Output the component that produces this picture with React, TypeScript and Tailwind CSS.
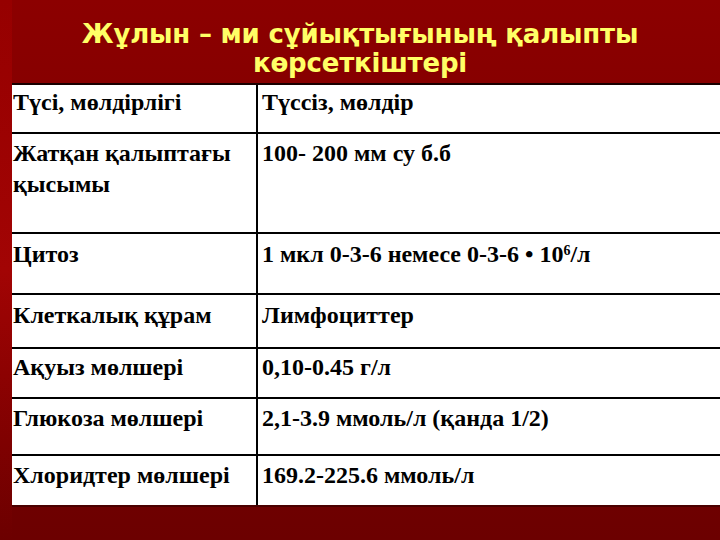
import React from "react";

type Row = { a: React.ReactNode; b: React.ReactNode; h: string; pt: string };

const rows: Row[] = [
  { a: "Түсі, мөлдірлігі", b: "Түссіз, мөлдір", h: "h-[49px]", pt: "pt-[2px]" },
  {
    a: (
      <>
        Жатқан қалыптағы
        <br />
        қысымы
      </>
    ),
    b: "100- 200 мм су б.б",
    h: "h-[100px]",
    pt: "pt-[4px]",
  },
  {
    a: "Цитоз",
    b: (
      <>
        1 мкл 0-3-6 немесе 0-3-6 • 10<sup className="text-[14px]">6</sup>/л
      </>
    ),
    h: "h-[61px]",
    pt: "pt-[5px]",
  },
  { a: "Клеткалық құрам", b: "Лимфоциттер", h: "h-[54px]", pt: "pt-[5px]" },
  { a: "Ақуыз мөлшері", b: "0,10-0.45 г/л", h: "h-[50px]", pt: "pt-[3px]" },
  { a: "Глюкоза мөлшері", b: "2,1-3.9 ммоль/л (қанда 1/2)", h: "h-[57px]", pt: "pt-[4px]" },
  { a: "Хлоридтер мөлшері", b: "169.2-225.6 ммоль/л", h: "h-[49px]", pt: "pt-[4px]" },
];

export default function App() {
  return (
    <div className="relative w-[720px] h-[540px] overflow-hidden bg-gradient-to-b from-[#8c0000] via-[#7c0000] to-[#6c0000]">
      <div className="absolute inset-y-0 left-0 w-[12px] bg-gradient-to-b from-[#960000] via-[#a20404] to-[#6c0000]" />
      <div className="relative flex flex-col">
        <div className="h-[83px] flex items-start justify-center pt-[20px]">
          <h1 className="text-center text-[#ffff66] font-bold text-[26px] leading-[29px] tracking-[-0.2px] [font-family:'DejaVu_Sans','Liberation_Sans',sans-serif]">
            Жұлын – ми сұйықтығының қалыпты
            <br />
            көрсеткіштері
          </h1>
        </div>
        <div className="ml-[12px] w-[720px] bg-white border-t-2 border-[#1a0000] shadow-[0_2px_0_#4a0000] [font-family:'Liberation_Serif',serif] font-bold text-black">
          {rows.map((r, i) => (
            <div
              key={i}
              className={`flex ${r.h} ${i < rows.length - 1 ? "border-b-2 border-black" : ""}`}
            >
              <div className={`w-[246px] shrink-0 border-r-2 border-black pl-[1px] ${r.pt} text-[24px] leading-[31px] whitespace-nowrap`}>
                {r.a}
              </div>
              <div className={`flex-1 pl-[4px] ${r.pt} text-[24px] leading-[31px] whitespace-nowrap`}>
                {r.b}
              </div>
            </div>
          ))}
        </div>
      </div>
    </div>
  );
}
